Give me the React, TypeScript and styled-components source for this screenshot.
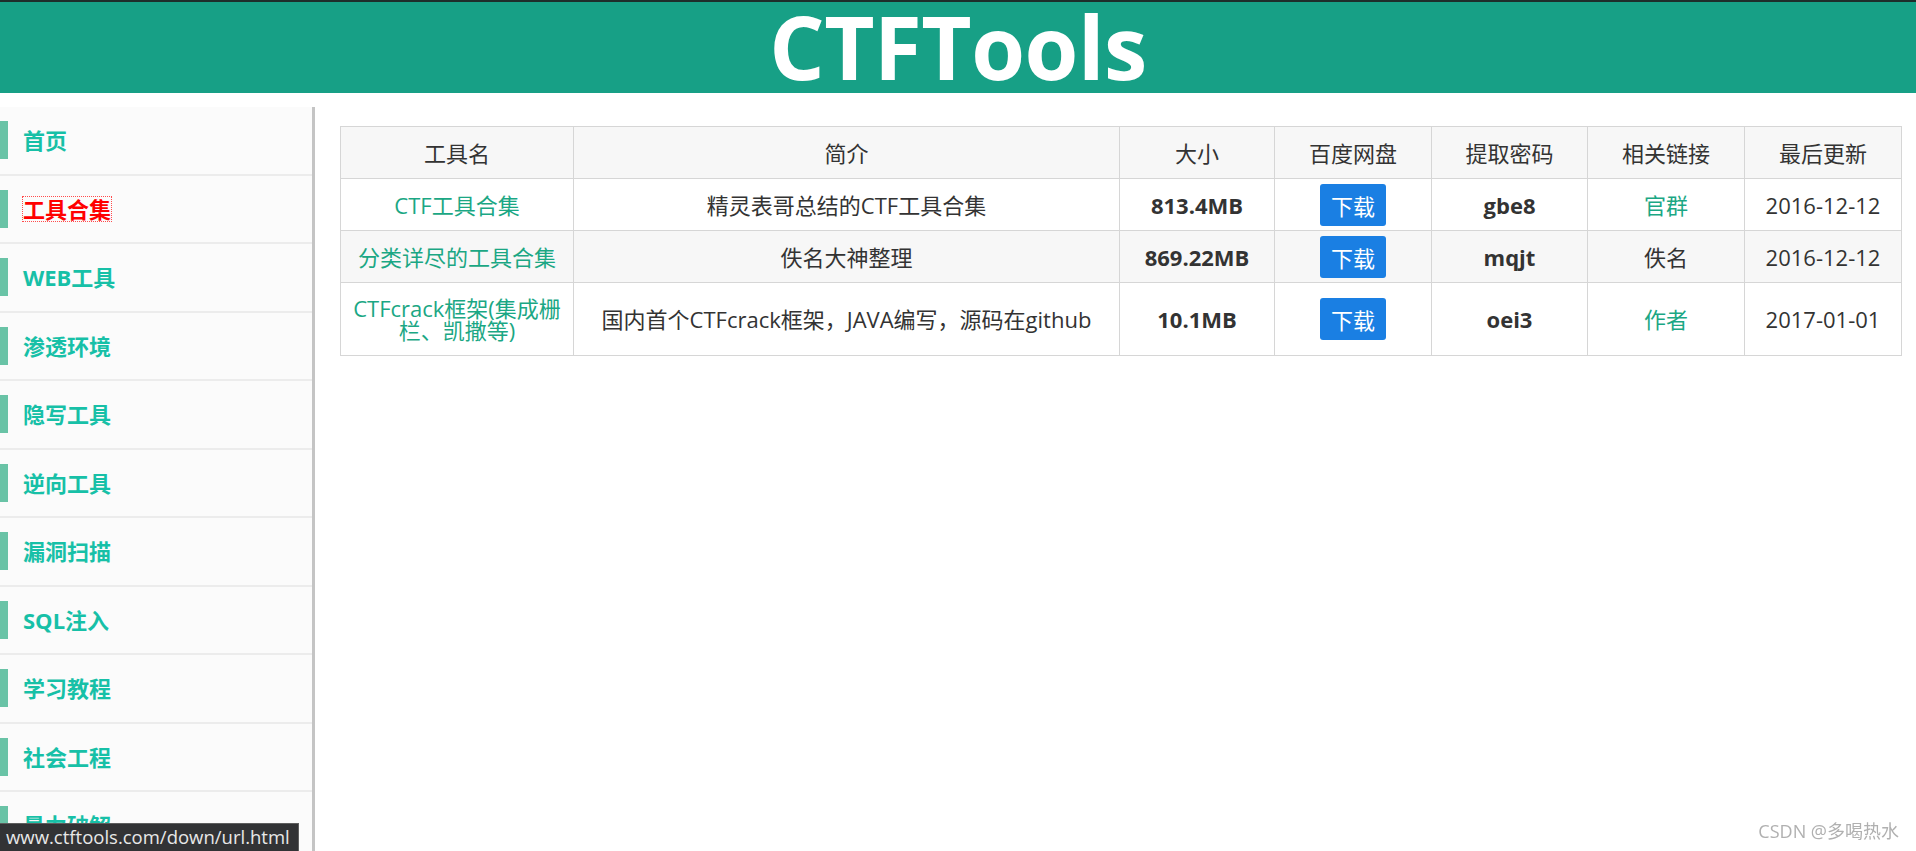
import React, { FC } from 'react';
import styled, { createGlobalStyle } from 'styled-components';

const GlobalStyle = createGlobalStyle`
  html, body {
    margin: 0;
    padding: 0;
    overflow: hidden;
    background: #fff;
    font-family: "Open Sans", "Noto Sans CJK SC", sans-serif;
    color: #333;
  }
  * {
    box-sizing: border-box;
  }
`;

type Tool = {
  name: string;
  intro: string;
  size: string;
  code: string;
  related: string;
  relatedIsLink: boolean;
  date: string;
};

const menu = [
  '首页',
  '工具合集',
  'WEB工具',
  '渗透环境',
  '隐写工具',
  '逆向工具',
  '漏洞扫描',
  'SQL注入',
  '学习教程',
  '社会工程',
  '暴力破解',
];

const tools: Tool[] = [
  {
    name: 'CTF工具合集',
    intro: '精灵表哥总结的CTF工具合集',
    size: '813.4MB',
    code: 'gbe8',
    related: '官群',
    relatedIsLink: true,
    date: '2016-12-12',
  },
  {
    name: '分类详尽的工具合集',
    intro: '佚名大神整理',
    size: '869.22MB',
    code: 'mqjt',
    related: '佚名',
    relatedIsLink: false,
    date: '2016-12-12',
  },
  {
    name: 'CTFcrack框架(集成栅栏、凯撒等)',
    intro: '国内首个CTFcrack框架，JAVA编写，源码在github',
    size: '10.1MB',
    code: 'oei3',
    related: '作者',
    relatedIsLink: true,
    date: '2017-01-01',
  },
];

const colWidths = [233, 546, 155, 157, 156, 157, 157];
const heads = ['工具名', '简介', '大小', '百度网盘', '提取密码', '相关链接', '最后更新'];

export const App: FC = () => {
  return (
    <>
      <GlobalStyle />
      <Header>
        <Title>CTFTools</Title>
      </Header>
      <Body>
        <Sidebar>
          {menu.map((item, i) => (
            <NavItem key={item}>
              <Marker />
              <NavLink href="#" $active={i === 1}>
                {item}
              </NavLink>
            </NavItem>
          ))}
        </Sidebar>
        <Main>
          <Table>
            <colgroup>
              {colWidths.map((w, i) => (
                <col key={i} style={{ width: w }} />
              ))}
            </colgroup>
            <thead>
              <Row $striped>
                {heads.map((h) => (
                  <HeadCell key={h}>{h}</HeadCell>
                ))}
              </Row>
            </thead>
            <tbody>
              {tools.map((t, i) => (
                <Row key={t.name} $striped={i % 2 === 1}>
                  <Cell>
                    <TableLink href="#">{t.name}</TableLink>
                  </Cell>
                  <Cell>{t.intro}</Cell>
                  <Cell $bold>{t.size}</Cell>
                  <Cell>
                    <DownloadButton href="#">下载</DownloadButton>
                  </Cell>
                  <Cell $bold>{t.code}</Cell>
                  <Cell>
                    {t.relatedIsLink ? (
                      <TableLink href="#">{t.related}</TableLink>
                    ) : (
                      t.related
                    )}
                  </Cell>
                  <Cell>{t.date}</Cell>
                </Row>
              ))}
            </tbody>
          </Table>
        </Main>
      </Body>
      <StatusBar>www.ctftools.com/down/url.html</StatusBar>
      <Watermark>CSDN @多喝热水</Watermark>
    </>
  );
};

export default App;

const Header = styled.header`
  height: 93px;
  border-top: 2px solid #1e2e2b;
  background: #17a086;
  text-align: center;
  overflow: hidden;
`;

const Title = styled.h1`
  margin: 0;
  font-family: "Open Sans", sans-serif;
  font-size: 87px;
  font-weight: 700;
  line-height: 89px;
  letter-spacing: -0.5px;
  color: #fff;
`;

const Body = styled.div`
  display: flex;
  align-items: flex-start;
  margin-top: 14px;
`;

const Sidebar = styled.nav`
  flex: none;
  width: 315px;
  border-right: 3px solid #c4c4c4;
  background: #fbfbfb;
`;

const NavItem = styled.div`
  display: flex;
  align-items: center;
  height: 68.5px;
  border-bottom: 2px solid #ececec;
`;

const Marker = styled.span`
  flex: none;
  width: 8px;
  height: 38px;
  margin-right: 15px;
  background: #69c3a6;
`;

const NavLink = styled.a<{ $active?: boolean }>`
  font-size: 22px;
  font-weight: 700;
  text-decoration: none;
  line-height: 24px;
  color: ${(p) => (p.$active ? '#ff0000' : '#17c0a7')};
  outline: ${(p) => (p.$active ? '1px dotted #ff4d4d' : 'none')};
`;

const Main = styled.main`
  flex: 1;
  padding: 19px 15px 0 25px;
`;

const Table = styled.table`
  width: 100%;
  table-layout: fixed;
  border-collapse: collapse;
  border: 1px solid #d6d6d6;
`;

const Row = styled.tr<{ $striped?: boolean }>`
  height: 52px;
  background: ${(p) => (p.$striped ? '#f7f7f7' : '#fff')};
`;

const HeadCell = styled.th`
  padding: 14px 8px;
  border: 1px solid #d6d6d6;
  font-size: 22px;
  font-weight: 400;
  line-height: 22px;
  text-align: center;
  vertical-align: middle;
`;

const Cell = styled.td<{ $bold?: boolean }>`
  padding: 14px 8px;
  border: 1px solid #d6d6d6;
  font-size: 22px;
  font-weight: ${(p) => (p.$bold ? 700 : 400)};
  line-height: 22px;
  text-align: center;
  vertical-align: middle;
`;

const TableLink = styled.a`
  color: #1ba784;
  text-decoration: none;
`;

const DownloadButton = styled.a`
  display: flex;
  align-items: center;
  justify-content: center;
  width: 66px;
  height: 42px;
  margin: -10px auto;
  border-radius: 3px;
  background: #1a7fe3;
  color: #fff;
  font-family: "Noto Sans CJK SC", sans-serif;
  font-size: 22px;
  line-height: 22px;
  text-decoration: none;
`;

const StatusBar = styled.div`
  position: fixed;
  left: 0;
  bottom: 0;
  padding: 1px 8px 2px 6px;
  background: #323335;
  border-top: 1px solid #5e5e5e;
  border-right: 1px solid #5e5e5e;
  color: #e8e8e8;
  font-family: "Open Sans", sans-serif;
  font-size: 18.5px;
  line-height: 24px;
`;

const Watermark = styled.div`
  position: fixed;
  right: 17px;
  bottom: 8px;
  color: #b0b0b0;
  font-family: "Open Sans", "Noto Sans CJK SC", sans-serif;
  font-size: 18px;
`;
